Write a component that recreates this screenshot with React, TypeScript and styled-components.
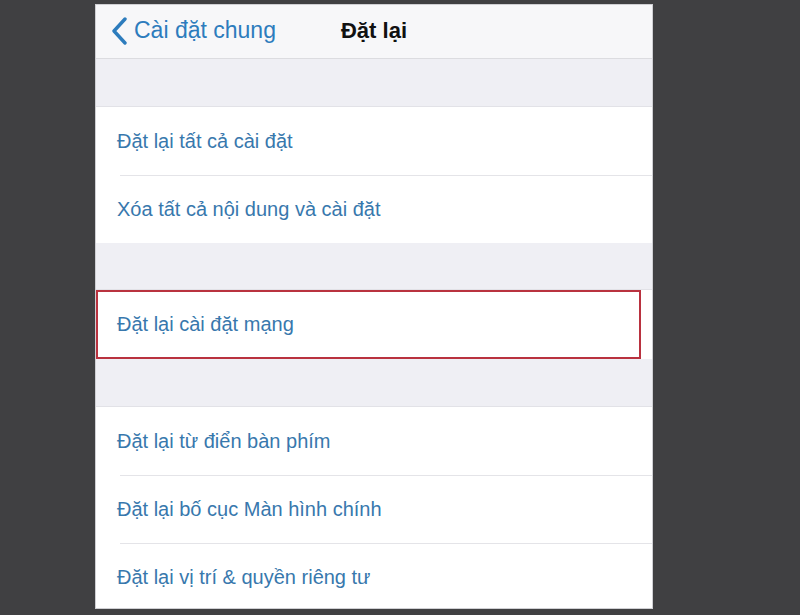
import React from "react";
import styled, { createGlobalStyle } from "styled-components";

const GlobalStyle = createGlobalStyle`
  html, body {
    margin: 0;
    padding: 0;
    background: #404042;
  }
  body {
    font-family: "Liberation Sans", Arial, sans-serif;
  }
`;

const StyledPage = styled.div`
  width: 800px;
  height: 615px;
  padding: 5px 0 0 96px;
  box-sizing: border-box;
  overflow: hidden;
`;

const StyledPhone = styled.div`
  width: 556px;
  height: 603px;
  background: #efeff4;
  box-shadow: 0 0 0 1px #cfcfd3;
  display: flex;
  flex-direction: column;
  overflow: hidden;
`;

const StyledNav = styled.div`
  height: 54px;
  flex-shrink: 0;
  background: #f7f7f9;
  border-bottom: 1px solid #dcdce0;
  box-sizing: border-box;
  display: grid;
  grid-template-columns: 1fr auto 1fr;
  align-items: center;
  padding: 0 14px 2px;
`;

const StyledBack = styled.div`
  display: flex;
  align-items: center;
  gap: 6px;
  color: #2d7cbd;
  font-size: 23px;
`;

const StyledTitle = styled.div`
  font-size: 22px;
  font-weight: bold;
  color: #111;
`;

const StyledGap = styled.div<{ $h: number }>`
  height: ${(p) => p.$h}px;
  flex-shrink: 0;
  background: #efeff4;
  border-bottom: 1px solid #e2e2e7;
  box-sizing: border-box;
`;

const StyledGroup = styled.div`
  background: #fff;
  flex-shrink: 0;
`;

const StyledRow = styled.div<{ $h?: number; $marked?: boolean }>`
  height: ${(p) => p.$h ?? 68}px;
  box-sizing: border-box;
  display: flex;
  align-items: center;
  font-size: 20px;
  color: #3878ad;
  position: relative;
  margin-right: ${(p) => (p.$marked ? "11px" : "0")};
  border: ${(p) => (p.$marked ? "2px solid #b9323f" : "none")};
  padding-left: ${(p) => (p.$marked ? "19px" : "21px")};

  & + &::before {
    content: "";
    position: absolute;
    top: 0;
    left: 24px;
    right: 0;
    height: 1px;
    background: #e4e4e8;
  }
`;

const Chevron = () => (
  <svg width="18" height="28" viewBox="0 0 18 28">
    <path
      d="M15 2 L4 14 L15 26"
      fill="none"
      stroke="#2d7cbd"
      strokeWidth="3.4"
      strokeLinecap="round"
      strokeLinejoin="round"
    />
  </svg>
);

const App = () => {
  return (
    <StyledPage>
      <GlobalStyle />
      <StyledPhone>
        <StyledNav>
          <StyledBack>
            <Chevron />
            <span>Cài đặt chung</span>
          </StyledBack>
          <StyledTitle>Đặt lại</StyledTitle>
          <div />
        </StyledNav>
        <StyledGap $h={48} />
        <StyledGroup>
          <StyledRow>Đặt lại tất cả cài đặt</StyledRow>
          <StyledRow>Xóa tất cả nội dung và cài đặt</StyledRow>
        </StyledGroup>
        <StyledGap $h={47} />
        <StyledGroup>
          <StyledRow $h={69} $marked>
            Đặt lại cài đặt mạng
          </StyledRow>
        </StyledGroup>
        <StyledGap $h={48} />
        <StyledGroup>
          <StyledRow>Đặt lại từ điển bàn phím</StyledRow>
          <StyledRow>Đặt lại bố cục Màn hình chính</StyledRow>
          <StyledRow>Đặt lại vị trí &amp; quyền riêng tư</StyledRow>
        </StyledGroup>
      </StyledPhone>
    </StyledPage>
  );
};

export default App;
